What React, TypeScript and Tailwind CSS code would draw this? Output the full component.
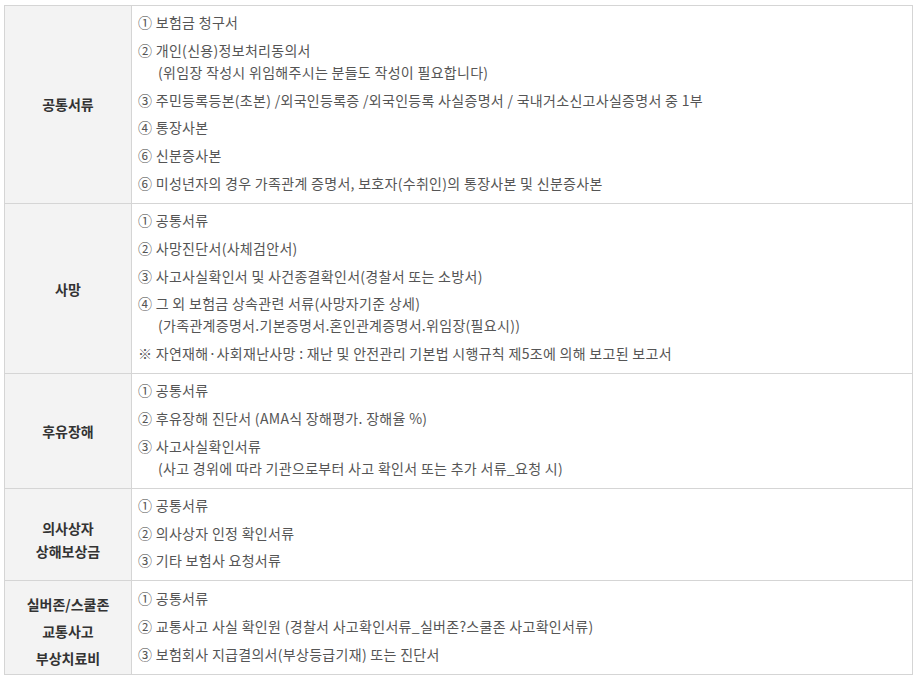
type Row = {
  title: string[];
  titleClass: string;
  items: { text: string; sub?: string }[];
};

const rows: Row[] = [
  {
    title: ["공통서류"],
    titleClass: "leading-[22px]",
    items: [
      { text: "① 보험금 청구서" },
      {
        text: "② 개인(신용)정보처리동의서",
        sub: "(위임장 작성시 위임해주시는 분들도 작성이 필요합니다)",
      },
      {
        text: "③ 주민등록등본(초본) /외국인등록증 /외국인등록 사실증명서 / 국내거소신고사실증명서 중 1부",
      },
      { text: "④ 통장사본" },
      { text: "⑥ 신분증사본" },
      { text: "⑥ 미성년자의 경우 가족관계 증명서, 보호자(수취인)의 통장사본 및 신분증사본" },
    ],
  },
  {
    title: ["사망"],
    titleClass: "leading-[22px]",
    items: [
      { text: "① 공통서류" },
      { text: "② 사망진단서(사체검안서)" },
      { text: "③ 사고사실확인서 및 사건종결확인서(경찰서 또는 소방서)" },
      {
        text: "④ 그 외 보험금 상속관련 서류(사망자기준 상세)",
        sub: "(가족관계증명서.기본증명서.혼인관계증명서.위임장(필요시))",
      },
      { text: "※ 자연재해·사회재난사망 : 재난 및 안전관리 기본법 시행규칙 제5조에 의해 보고된 보고서" },
    ],
  },
  {
    title: ["후유장해"],
    titleClass: "leading-[22px]",
    items: [
      { text: "① 공통서류" },
      { text: "② 후유장해 진단서 (AMA식 장해평가. 장해율 %)" },
      {
        text: "③ 사고사실확인서류",
        sub: "(사고 경위에 따라 기관으로부터 사고 확인서 또는 추가 서류_요청 시)",
      },
    ],
  },
  {
    title: ["의사상자", "상해보상금"],
    titleClass: "leading-[23px] pt-[10px]",
    items: [
      { text: "① 공통서류" },
      { text: "② 의사상자 인정 확인서류" },
      { text: "③ 기타 보험사 요청서류" },
    ],
  },
  {
    title: ["실버존/스쿨존", "교통사고", "부상치료비"],
    titleClass: "leading-[27px] pt-[10px] pb-[2px]",
    items: [
      { text: "① 공통서류" },
      { text: "② 교통사고 사실 확인원 (경찰서 사고확인서류_실버존?스쿨존 사고확인서류)" },
      { text: "③ 보험회사 지급결의서(부상등급기재) 또는 진단서" },
    ],
  },
];

export default function App() {
  return (
    <div
      className="bg-white w-[917px] h-[681px] pt-[5px] pl-[4px]"
      style={{ fontFamily: '"Noto Sans CJK KR", "Noto Sans", sans-serif' }}
    >
      <table className="w-[909px] border-collapse border border-[#d5d5d5] text-[14px]">
        <tbody>
          {rows.map((row) => (
            <tr key={row.title.join("")} className="border-b border-[#d5d5d5]">
              <th
                className={`w-[127px] bg-[#f3f3f3] border-r border-[#d5d5d5] text-center align-middle font-bold text-[#333] ${row.titleClass}`}
              >
                {row.title.map((t) => (
                  <div key={t}>{t}</div>
                ))}
              </th>
              <td className="pl-[6px] pr-2 pt-[5px] pb-[9px] align-middle text-[#555] tracking-[0.3px]">
                <div className="flex flex-col gap-[5.8px]">
                  {row.items.map((item) => (
                    <div key={item.text} className="leading-[22px]">
                      <div>{item.text}</div>
                      {item.sub && <div className="pl-[20px]">{item.sub}</div>}
                    </div>
                  ))}
                </div>
              </td>
            </tr>
          ))}
        </tbody>
      </table>
    </div>
  );
}
